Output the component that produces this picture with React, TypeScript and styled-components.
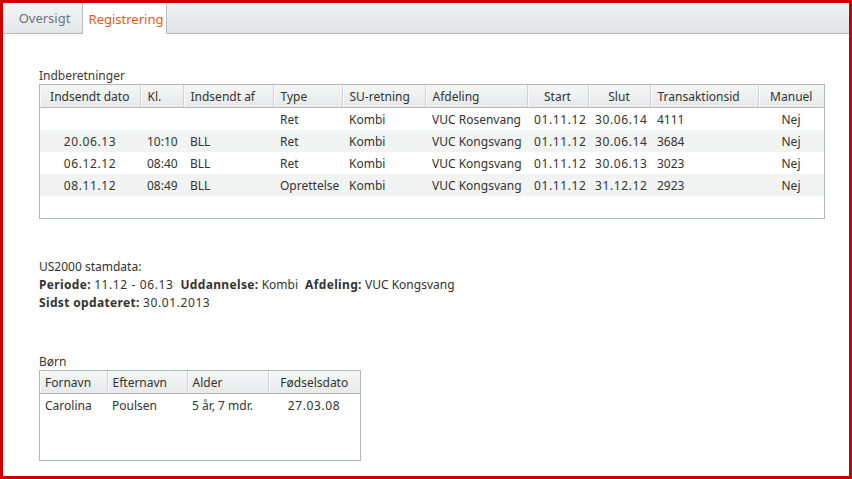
import React from "react";
import styled, { createGlobalStyle } from "styled-components";

const GlobalStyle = createGlobalStyle`
  html, body {
    margin: 0;
    padding: 0;
    background: #ffffff;
  }
  body {
    font-family: "Noto Sans", "Open Sans", sans-serif;
    font-size: 12px;
    color: #333;
  }
`;

const Frame = styled.div`
  box-sizing: border-box;
  width: 852px;
  height: 479px;
  border: 3px solid #c80000;
  background: #fff;
  overflow: hidden;
`;

const TabBar = styled.div`
  display: flex;
  height: 30px;
  background: linear-gradient(#eff0f1, #e1e4e5);
  border-bottom: 1px solid #b7bcbc;
`;

const Tab = styled.div<{ $active?: boolean }>`
  display: flex;
  align-items: center;
  justify-content: center;
  box-sizing: border-box;
  height: ${(p) => (p.$active ? "31px" : "30px")};
  padding: 0 ${(p) => (p.$active ? "3px" : "12px")} 0 ${(p) => (p.$active ? "6px" : "16px")};
  font-size: 13px;
  color: ${(p) => (p.$active ? "#f0561d" : "#6a7280")};
  background: ${(p) => (p.$active ? "#ffffff" : "linear-gradient(#f3f4f5, #e4e7e8)")};
  border-right: 1px solid #b7bcbc;
  border-left: ${(p) => (p.$active ? "1px solid #b7bcbc" : "none")};
  border-bottom-right-radius: ${(p) => (p.$active ? "0" : "3px")};
  margin-left: ${(p) => (p.$active ? "-1px" : "0")};
  width: ${(p) => (p.$active ? "85px" : "80px")};
  z-index: ${(p) => (p.$active ? 1 : 0)};
`;

const Content = styled.div`
  padding: 34px 0 0 36px;
`;

const Label = styled.div`
  line-height: 16px;
  color: #3a3a3a;
`;

const Section = styled.div<{ $gap: number }>`
  margin-top: ${(p) => p.$gap}px;
`;

const TableBox = styled.div<{ $width: number; $height: number }>`
  box-sizing: border-box;
  width: ${(p) => p.$width}px;
  height: ${(p) => p.$height}px;
  border: 1px solid #b3b8b8;
  background: #fff;
  overflow: hidden;
`;

const Grid = styled.table`
  border-collapse: collapse;
  table-layout: fixed;
  width: 100%;
  font-size: 12px;
  color: #333;
`;

const Th = styled.th<{ $align?: string; $last?: boolean; $pad: number }>`
  height: 21px;
  padding: 1px ${(p) => p.$pad}px 0;
  font-weight: normal;
  text-align: ${(p) => p.$align || "left"};
  white-space: nowrap;
  background: linear-gradient(#f5f6f6, #e7e9ea);
  border-bottom: 1px solid #b3b8b8;
  border-right: ${(p) => (p.$last ? "none" : "1px solid #cfd3d3")};
  box-shadow: inset 1px 0 0 #fbfbfb;
  color: #333;
`;

const Tr = styled.tr<{ $alt?: boolean }>`
  background: ${(p) => (p.$alt ? "#f2f3f3" : "#ffffff")};
`;

const Td = styled.td<{ $align?: string; $num?: boolean; $pad: number }>`
  height: 21px;
  padding: 1px ${(p) => p.$pad}px 0;
  text-align: ${(p) => p.$align || "left"};
  letter-spacing: ${(p) => (p.$num ? "0.6px" : "normal")};
  white-space: nowrap;
  overflow: hidden;
`;

const InfoLine = styled.div`
  line-height: 18px;
  color: #333;
  b {
    font-weight: bold;
    letter-spacing: 0.35px;
    color: #333;
  }
`;

const Num = styled.span`
  letter-spacing: 0.6px;
`;

const Spacer = styled.span`
  display: inline-block;
  width: 7px;
`;

type Col = { title: string; width: number; align?: string; cellAlign?: string; num?: boolean };

const reportCols: Col[] = [
  { title: "Indsendt dato", width: 100, align: "center", cellAlign: "center", num: true },
  { title: "Kl.", width: 43 },
  { title: "Indsendt af", width: 90 },
  { title: "Type", width: 69 },
  { title: "SU-retning", width: 83 },
  { title: "Afdeling", width: 102 },
  { title: "Start", width: 61, align: "center", cellAlign: "center", num: true },
  { title: "Slut", width: 62, align: "center", cellAlign: "center", num: true },
  { title: "Transaktionsid", width: 108 },
  { title: "Manuel", width: 66, align: "center", cellAlign: "center" },
];

const reports = [
  ["", "", "", "Ret", "Kombi", "VUC Rosenvang", "01.11.12", "30.06.14", "4111", "Nej"],
  ["20.06.13", "10:10", "BLL", "Ret", "Kombi", "VUC Kongsvang", "01.11.12", "30.06.14", "3684", "Nej"],
  ["06.12.12", "08:40", "BLL", "Ret", "Kombi", "VUC Kongsvang", "01.11.12", "30.06.13", "3023", "Nej"],
  ["08.11.12", "08:49", "BLL", "Oprettelse", "Kombi", "VUC Kongsvang", "01.11.12", "31.12.12", "2923", "Nej"],
];

const childCols: Col[] = [
  { title: "Fornavn", width: 67 },
  { title: "Efternavn", width: 80 },
  { title: "Alder", width: 81 },
  { title: "Fødselsdato", width: 92, align: "center", cellAlign: "center", num: true },
];

const children = [["Carolina", "Poulsen", "5 år, 7 mdr.", "27.03.08"]];

const DataTable: React.FC<{
  cols: Col[];
  rows: string[][];
  width: number;
  height: number;
  pad: number;
  striped?: boolean;
}> = ({ cols, rows, width, height, pad, striped }) => (
  <TableBox $width={width} $height={height}>
    <Grid>
      <colgroup>
        {cols.map((c) => (
          <col key={c.title} style={{ width: c.width }} />
        ))}
      </colgroup>
      <thead>
        <tr>
          {cols.map((c, i) => (
            <Th key={c.title} $align={c.align} $last={i === cols.length - 1} $pad={pad}>
              {c.title}
            </Th>
          ))}
        </tr>
      </thead>
      <tbody>
        {rows.map((r, ri) => (
          <Tr key={ri} $alt={striped && ri % 2 === 1}>
            {r.map((v, ci) => (
              <Td key={ci} $align={cols[ci].cellAlign} $num={cols[ci].num} $pad={pad}>
                {v}
              </Td>
            ))}
          </Tr>
        ))}
      </tbody>
    </Grid>
  </TableBox>
);

export default function App() {
  return (
    <>
      <GlobalStyle />
      <Frame>
        <TabBar>
          <Tab>Oversigt</Tab>
          <Tab $active>Registrering</Tab>
        </TabBar>
        <Content>
          <Label>Indberetninger</Label>
          <DataTable cols={reportCols} rows={reports} width={786} height={135} pad={7} striped />

          <Section $gap={39}>
            <InfoLine>US2000 stamdata:</InfoLine>
            <InfoLine>
              <b>Periode:</b> <Num>11.12 - 06.13</Num>
              <Spacer />
              <b>Uddannelse:</b> Kombi<Spacer />
              <b>Afdeling:</b> VUC Kongsvang
            </InfoLine>
            <InfoLine>
              <b>Sidst opdateret:</b> <Num>30.01.2013</Num>
            </InfoLine>
          </Section>

          <Section $gap={42}>
            <Label>Børn</Label>
            <DataTable cols={childCols} rows={children} width={322} height={91} pad={5} />
          </Section>
        </Content>
      </Frame>
    </>
  );
}
